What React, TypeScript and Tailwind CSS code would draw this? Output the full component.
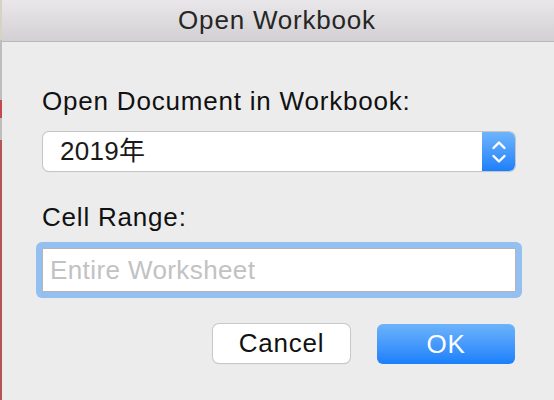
export default function App() {
  return (
    <div className="w-[554px] h-[400px] flex bg-[#d8d8d8] overflow-hidden tracking-[0.8px]" style={{ fontFamily: '"Liberation Sans", "Noto Sans CJK SC", sans-serif' }}>
      {/* window behind */}
      <div className="w-[2px] h-full flex flex-col bg-[#bdbdbd]">
        <div className="h-[40px] bg-[#d6d3c6]" />
        <div className="h-[18px] mt-[60px] bg-[#c24a4a]" />
        <div className="flex-1 mt-[22px] bg-[#b25555]" />
      </div>

      {/* dialog */}
      <div className="flex-1 flex flex-col bg-[#ececec] rounded-tl-[4px]">
        <div className="h-[42px] flex items-center justify-center bg-gradient-to-b from-[#e9e7e9] to-[#d2d0d2] border-b border-[#b9b7b9] text-[26px] text-[#262626] pb-[1px] pr-[2px]">
          Open Workbook
        </div>

        <div className="flex flex-col pl-[34px] pr-[32px]">
          <div className="mt-[44px] h-[30px] flex items-center text-[26px] text-[#111] pl-[6px]">
            Open Document in Workbook:
          </div>

          <div className="mt-[16px] mx-[7px] h-[39px] flex rounded-[6px] bg-white shadow-[0_0_0_1px_#c5c5c5,0_1px_1px_rgba(0,0,0,0.15)]">
            <div className="flex-1 flex items-center pl-[17px] text-[26px] text-[#1a1a1a] tracking-[0.3px]">
              2019年
            </div>
            <div className="w-[33px] flex items-center justify-center rounded-r-[6px] bg-gradient-to-b from-[#6db4fb] to-[#1a7ffb]">
              <svg width="16" height="26" viewBox="0 0 16 26" fill="none" stroke="white" strokeWidth="2.4" strokeLinecap="round" strokeLinejoin="round">
                <path d="M2.5 9 8 3.5 13.5 9" />
                <path d="M2.5 17 8 22.5 13.5 17" />
              </svg>
            </div>
          </div>

          <div className="mt-[31px] h-[30px] flex items-center text-[26px] text-[#111] pl-[6px]">
            Cell Range:
          </div>

          <div className="mt-[10px] h-[56px] p-[6px] rounded-[6px] bg-[#93c0f1]">
            <div className="h-full flex items-center bg-white border border-[#b4b4b4] pl-[7px] text-[26px] text-[#c2c2c2] tracking-[0.4px]">
              Entire Worksheet
            </div>
          </div>

          <div className="mt-[26px] flex justify-end gap-[27px] pr-[7px]">
            <div className="w-[137px] h-[39px] flex items-center justify-center rounded-[6px] bg-white shadow-[0_0_0_1px_#c8c8c8,0_1px_1px_rgba(0,0,0,0.2)] text-[26px] text-[#111]">
              Cancel
            </div>
            <div className="w-[138px] h-[40px] flex items-center justify-center rounded-[6px] bg-gradient-to-b from-[#6cb3fa] to-[#187ffb] text-[26px] text-white">
              OK
            </div>
          </div>
        </div>
      </div>
    </div>
  )
}
